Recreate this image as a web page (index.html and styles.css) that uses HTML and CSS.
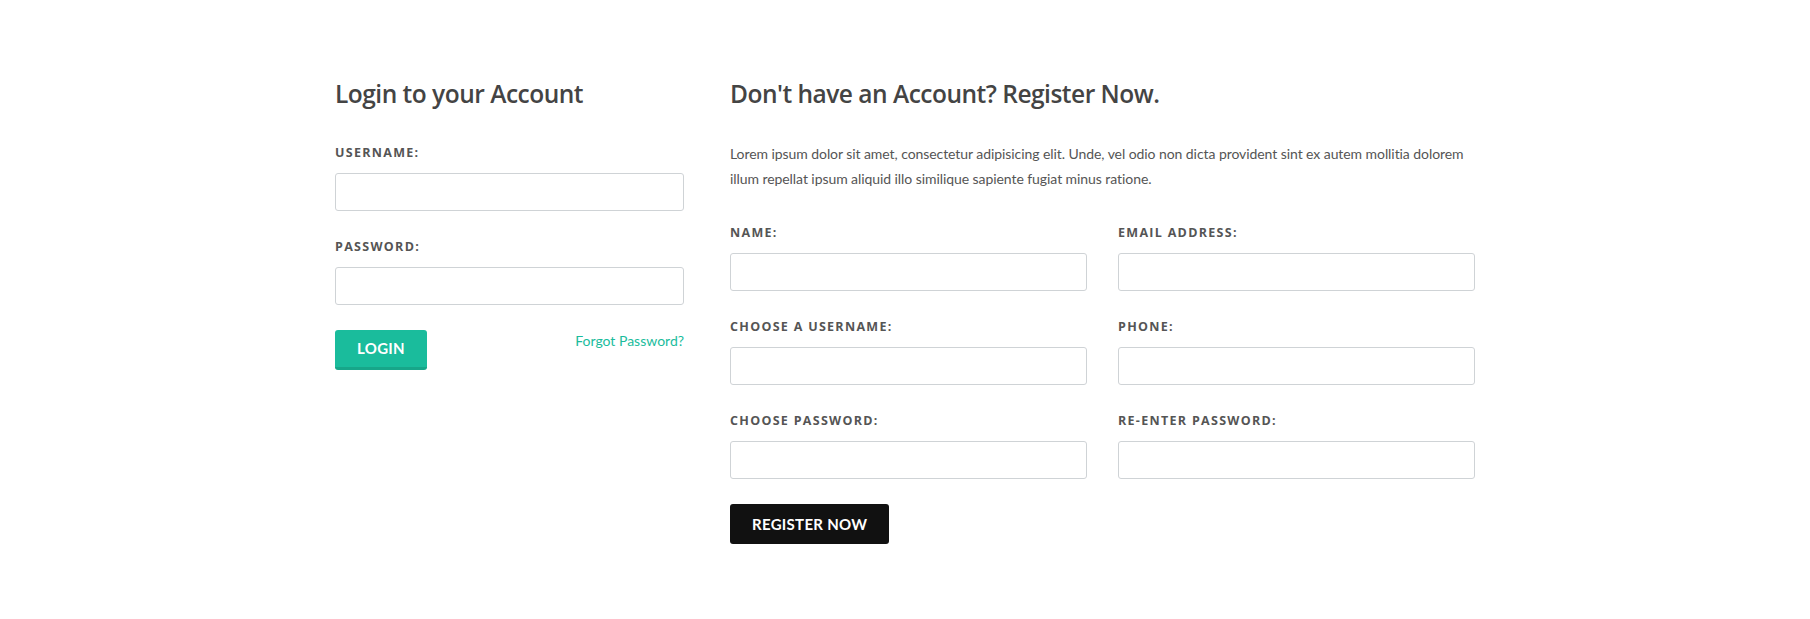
FILE: index.html
```html
<!DOCTYPE html>
<html lang="en">
<head>
<meta charset="utf-8">
<title>Login / Register</title>
<link rel="stylesheet" href="styles.css">
</head>
<body>
<div class="container">
  <div class="login-col">
    <h3 class="title">Login to your Account</h3>
    <form class="login-form">
      <div class="field">
        <label>Username:</label>
        <input type="text" class="control">
      </div>
      <div class="field">
        <label>Password:</label>
        <input type="password" class="control">
      </div>
      <div class="actions">
        <button type="button" class="btn btn-green">Login</button>
        <a href="#" class="forgot">Forgot Password?</a>
      </div>
    </form>
  </div>
  <div class="register-col">
    <h3 class="title">Don't have an Account? Register Now.</h3>
    <p class="intro">Lorem ipsum dolor sit amet, consectetur adipisicing elit. Unde, vel odio non dicta provident sint ex autem mollitia dolorem illum repellat ipsum aliquid illo similique sapiente fugiat minus ratione.</p>
    <form class="register-form">
      <div class="grid">
        <div class="field">
          <label>Name:</label>
          <input type="text" class="control">
        </div>
        <div class="field">
          <label>Email Address:</label>
          <input type="text" class="control">
        </div>
        <div class="field">
          <label>Choose a Username:</label>
          <input type="text" class="control">
        </div>
        <div class="field">
          <label>Phone:</label>
          <input type="text" class="control">
        </div>
        <div class="field">
          <label>Choose Password:</label>
          <input type="password" class="control">
        </div>
        <div class="field">
          <label>Re-enter Password:</label>
          <input type="password" class="control">
        </div>
      </div>
      <div class="actions">
        <button type="button" class="btn btn-dark">Register Now</button>
      </div>
    </form>
  </div>
</div>
</body>
</html>
```
FILE: styles.css
```css
* { box-sizing: border-box; }
html, body { margin: 0; padding: 0; background: #fff; }
body {
  font-family: "Lato", "Liberation Sans", sans-serif;
  font-size: 14px;
  line-height: 21px;
  color: #555;
}
.container {
  width: 1140px;
  margin: 0 auto;
  padding-top: 79px;
  display: flex;
  justify-content: space-between;
  align-items: flex-start;
}
.login-col { width: 349px; }
.register-col { width: 745px; }
.title {
  margin: 0 0 32px;
  font-family: "Open Sans", "Liberation Sans", sans-serif;
  font-weight: 600;
  font-size: 24.5px;
  line-height: 30px;
  color: #444;
  letter-spacing: -0.5px;
}
.login-form { padding-top: 4px; }
.intro {
  margin: 0 0 34px;
  line-height: 25px;
  letter-spacing: -0.07px;
  color: #555;
}
.field { margin-bottom: 28px; }
.field label {
  display: block;
  font-family: "Open Sans", "Liberation Sans", sans-serif;
  font-weight: 700;
  font-size: 12.5px;
  line-height: 16px;
  letter-spacing: 1.3px;
  text-transform: uppercase;
  color: #555;
  margin-bottom: 12px;
}
.control {
  display: block;
  width: 100%;
  height: 38px;
  border: 1px solid #cfd3d6;
  border-radius: 3px;
  background: #fff;
  padding: 6px 12px;
  font: inherit;
  color: #555;
  outline: none;
}
.grid {
  display: grid;
  grid-template-columns: 1fr 1fr;
  column-gap: 31px;
}
.actions {
  display: flex;
  justify-content: space-between;
  align-items: flex-start;
  margin-top: -3px;
}
.btn {
  height: 40px;
  padding: 0 22px;
  border: 0;
  border-radius: 3px;
  font-family: "Lato", "Liberation Sans", sans-serif;
  font-weight: 700;
  font-size: 15px;
  line-height: 37px;
  letter-spacing: 0.3px;
  text-transform: uppercase;
  color: #fff;
  cursor: pointer;
}
.btn-green {
  background: #1abc9c;
  border-bottom: 3px solid #17a689;
  line-height: 37px;
}
.btn-dark {
  background: #111;
  line-height: 40px;
}
.forgot {
  color: #1abc9c;
  text-decoration: none;
  font-size: 14px;
  line-height: 21px;
}
```
